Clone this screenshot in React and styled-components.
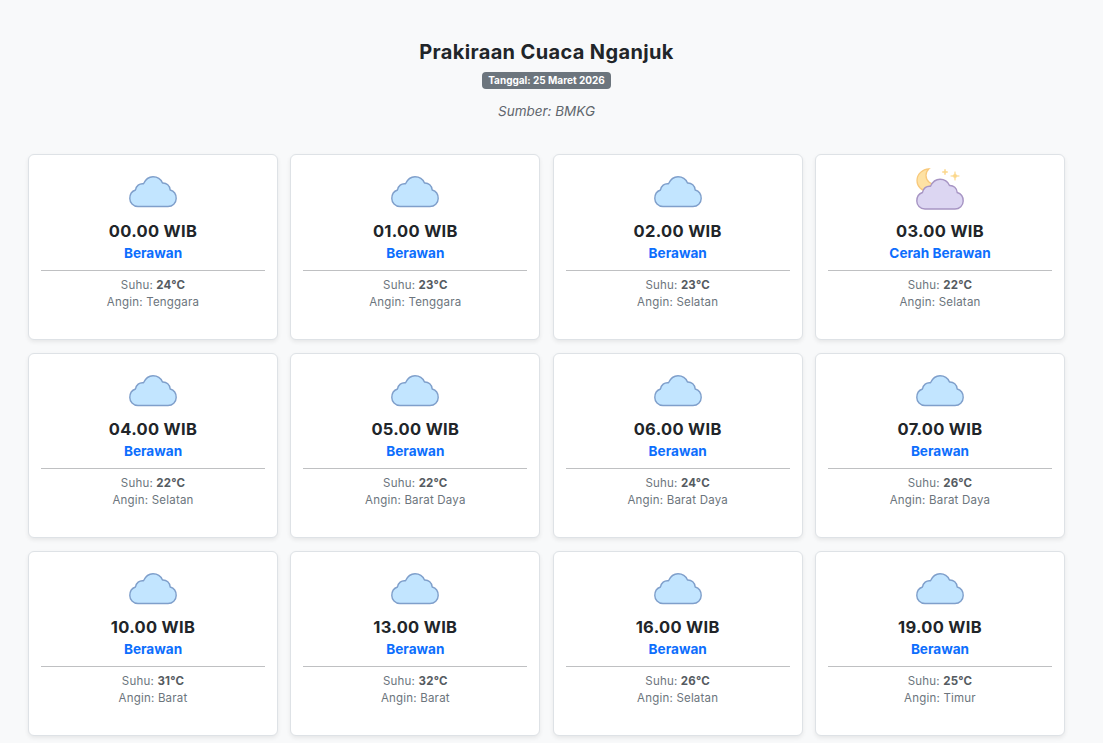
import styled, { createGlobalStyle } from "styled-components";

const GlobalStyle = createGlobalStyle`
  html, body {
    margin: 0;
    background: #f8f9fa;
    color: #212529;
    font-family: Inter, "Open Sans", sans-serif;
  }
`;

const Page = styled.div`
  box-sizing: border-box;
  width: 1103px;
  padding: 40px 38px 7px 28px;
`;

const Header = styled.header`
  display: flex;
  flex-direction: column;
  align-items: center;
  margin-bottom: 33.4px;
`;

const Title = styled.h1`
  margin: 0;
  font-size: 20px;
  line-height: 24px;
  font-weight: 700;
  letter-spacing: 0.36px;
`;

const DateBadge = styled.span`
  margin-top: 8px;
  padding: 0 6.5px;
  height: 17px;
  line-height: 17px;
  border-radius: 4px;
  background: #6c757d;
  color: #fff;
  font-size: 10px;
  font-weight: 700;
`;

const Source = styled.p`
  margin: 12px 0 0;
  font-size: 13.5px;
  line-height: 20px;
  font-style: italic;
  color: #5f666d;
`;

const Grid = styled.main`
  display: grid;
  grid-template-columns: repeat(4, 1fr);
  grid-auto-rows: 185.4px;
  gap: 12.9px 12.3px;
`;

const Card = styled.article`
  box-sizing: border-box;
  display: flex;
  flex-direction: column;
  align-items: center;
  padding: 13px 12px 0;
  background: #fff;
  border: 1px solid #dee2e6;
  border-radius: 6px;
  box-shadow: 0 2px 4px rgba(0, 0, 0, 0.075);
`;

const IconBox = styled.div`
  height: 42px;
  display: flex;
`;

const Hour = styled.h2`
  margin: 10.5px 0 0;
  font-size: 16.5px;
  line-height: 20px;
  font-weight: 700;
  letter-spacing: 0.3px;
`;

const Condition = styled.div`
  margin-top: 3px;
  font-size: 13.6px;
  line-height: 18px;
  font-weight: 700;
  color: #0d6efd;
`;

const Divider = styled.hr`
  width: 100%;
  margin: 7.7px 0 6.1px;
  border: 0;
  border-top: 1px solid #bfc0c2;
`;

const Detail = styled.div`
  font-size: 11.5px;
  line-height: 17px;
  letter-spacing: 0.2px;
  color: #6c757d;

  b {
    font-weight: 700;
    color: #555b61;
  }
`;

const CloudPath = ({ fill, stroke }) => (
  <path
    d="M9 30.5C4 30.5 0.8 26.5 0.8 22.5C0.8 18 3.5 15 6.5 14C7 10 10.5 7.2 14.5 7.8C16.5 3.5 20 0.8 24 0.8C28.5 0.8 32 3.5 33.5 7C37.5 6.8 41 9.8 41.2 14C44.8 15 47.2 18.5 47.2 22.5C47.2 27 43.5 30.5 39 30.5Z"
    fill={fill}
    stroke={stroke}
    strokeWidth="1.4"
    strokeLinejoin="round"
  />
);

const Cloud = () => (
  <svg width="48" height="42" viewBox="0 0 48 42">
    <g transform="translate(0 8)">
      <CloudPath fill="#c2e5ff" stroke="#7f9fcb" />
    </g>
  </svg>
);

const Star = ({ x, y, r }) => (
  <path
    d={`M${x} ${y - r}Q${x} ${y} ${x + r} ${y}Q${x} ${y} ${x} ${y + r}Q${x} ${y} ${x - r} ${y}Q${x} ${y} ${x} ${y - r}Z`}
    fill="#fbd78a"
    stroke="#fbd78a"
    strokeWidth="0.6"
  />
);

const NightCloud = () => (
  <svg width="48" height="42" viewBox="0 0 48 42">
    <path
      d="M13 0.8C6.5 1.2 1 6 1 12.5C1 18.5 5.5 23 12 23C17 23 20 20.5 22 17C14.5 17.5 10 12.5 10 7.5C10 4.8 11 2.6 13 0.8Z"
      fill="#fee2a4"
      stroke="#f8c97c"
      strokeWidth="1.3"
    />
    <Star x={29} y={4} r={3} />
    <Star x={39} y={8} r={4.4} />
    <g transform="translate(0 10.5)">
      <CloudPath fill="#dcd6f2" stroke="#a795c4" />
    </g>
  </svg>
);

const forecasts = [
  { hour: "00.00", temp: 24, wind: "Tenggara" },
  { hour: "01.00", temp: 23, wind: "Tenggara" },
  { hour: "02.00", temp: 23, wind: "Selatan" },
  { hour: "03.00", temp: 22, wind: "Selatan", night: true },
  { hour: "04.00", temp: 22, wind: "Selatan" },
  { hour: "05.00", temp: 22, wind: "Barat Daya" },
  { hour: "06.00", temp: 24, wind: "Barat Daya" },
  { hour: "07.00", temp: 26, wind: "Barat Daya" },
  { hour: "10.00", temp: 31, wind: "Barat" },
  { hour: "13.00", temp: 32, wind: "Barat" },
  { hour: "16.00", temp: 26, wind: "Selatan" },
  { hour: "19.00", temp: 25, wind: "Timur" },
];

const App = () => (
  <>
    <GlobalStyle />
    <Page>
      <Header>
        <Title>Prakiraan Cuaca Nganjuk</Title>
        <DateBadge>Tanggal: 25 Maret 2026</DateBadge>
        <Source>Sumber: BMKG</Source>
      </Header>
      <Grid>
        {forecasts.map((item) => (
          <Card key={item.hour}>
            <IconBox>{item.night ? <NightCloud /> : <Cloud />}</IconBox>
            <Hour>{item.hour} WIB</Hour>
            <Condition>{item.night ? "Cerah Berawan" : "Berawan"}</Condition>
            <Divider />
            <Detail>
              Suhu: <b>{item.temp}°C</b>
            </Detail>
            <Detail>Angin: {item.wind}</Detail>
          </Card>
        ))}
      </Grid>
    </Page>
  </>
);

export default App;
